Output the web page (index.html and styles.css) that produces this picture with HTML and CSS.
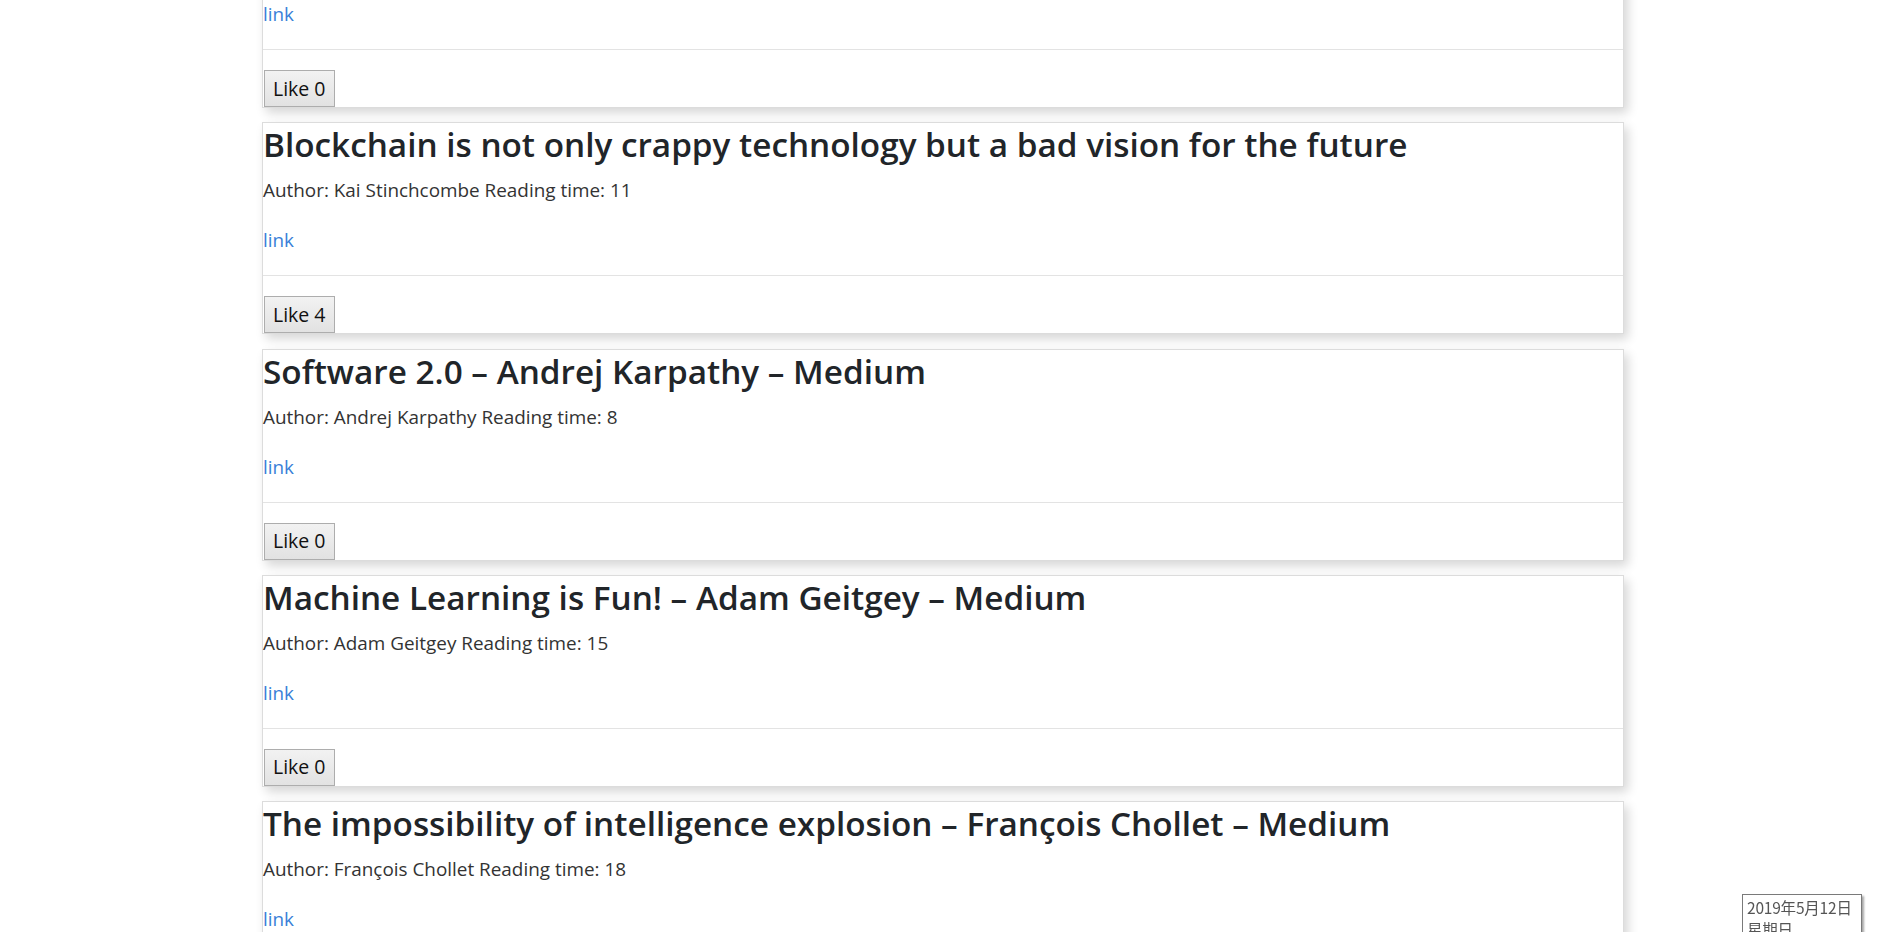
FILE: index.html
```html
<!DOCTYPE html>
<html lang="en">
<head>
<meta charset="utf-8">
<title>Reading list</title>
<link rel="stylesheet" href="styles.css">
</head>
<body>
<main class="feed">
  <article class="card card--scrolled">
    <h3 class="card-title">Why We Sleep – Matthew Walker – Medium</h3>
    <p class="card-meta">Author: Matthew Walker Reading time: 9</p>
    <p class="card-link"><a href="#">link</a></p>
    <hr class="card-rule">
    <button class="like-btn" type="button">Like 0</button>
  </article>
  <article class="card">
    <h3 class="card-title">Blockchain is not only crappy technology but a bad vision for the future</h3>
    <p class="card-meta">Author: Kai Stinchcombe Reading time: 11</p>
    <p class="card-link"><a href="#">link</a></p>
    <hr class="card-rule">
    <button class="like-btn" type="button">Like 4</button>
  </article>
  <article class="card">
    <h3 class="card-title">Software 2.0 – Andrej Karpathy – Medium</h3>
    <p class="card-meta">Author: Andrej Karpathy Reading time: 8</p>
    <p class="card-link"><a href="#">link</a></p>
    <hr class="card-rule">
    <button class="like-btn" type="button">Like 0</button>
  </article>
  <article class="card">
    <h3 class="card-title">Machine Learning is Fun! – Adam Geitgey – Medium</h3>
    <p class="card-meta">Author: Adam Geitgey Reading time: 15</p>
    <p class="card-link"><a href="#">link</a></p>
    <hr class="card-rule">
    <button class="like-btn" type="button">Like 0</button>
  </article>
  <article class="card">
    <h3 class="card-title">The impossibility of intelligence explosion – François Chollet – Medium</h3>
    <p class="card-meta">Author: François Chollet Reading time: 18</p>
    <p class="card-link"><a href="#">link</a></p>
    <hr class="card-rule">
    <button class="like-btn" type="button">Like 0</button>
  </article>
</main>
<div class="clock-tip">
  <span class="clock-line">2019年5月12日</span>
  <span class="clock-line">星期日</span>
</div>
</body>
</html>
```
FILE: styles.css
```css
html, body {
  margin: 0;
  padding: 0;
  background: #ffffff;
}

body {
  font-family: "Open Sans", "Noto Sans", sans-serif;
  font-size: 18.9px;
  line-height: 30px;
  color: #212529;
  overflow: hidden;
  height: 932px;
}

.feed {
  width: 1362px;
  padding-right: 3px;
  margin: 0 auto;
  display: flex;
  flex-direction: column;
  gap: 14.3px;
}

.card--scrolled {
  margin-top: -104px;
}

.card {
  box-sizing: border-box;
  display: flex;
  flex-direction: column;
  align-items: flex-start;
  background: #ffffff;
  border: 1px solid #dcdcdc;
  box-shadow: 4px 5px 10px rgba(0, 0, 0, 0.16);
}

.card-title {
  margin: 0 0 10px 0;
  padding-top: 1px;
  font-size: 33.3px;
  font-weight: 600;
  line-height: 41px;
  color: #212529;
}

.card-meta {
  margin: 0 0 20px 0;
  color: #333333;
}

.card-link {
  margin: 0 0 20px 0;
}

.card-link a {
  color: #3a7fd8;
  text-decoration: none;
}

.card-rule {
  align-self: stretch;
  margin: 0 0 20px 0;
  border: 0;
  border-top: 1px solid #e3e3e3;
  height: 0;
}

.like-btn {
  margin: 0 0 0 1px;
  box-sizing: border-box;
  height: 37px;
  padding: 0 8px;
  font-family: "Open Sans", "Noto Sans", sans-serif;
  font-size: 19.5px;
  line-height: 30px;
  color: #111111;
  background: linear-gradient(#f2f2f2, #e2e2e2);
  border: 1px solid #adadad;
  border-radius: 0;
}

.clock-tip {
  position: fixed;
  left: 1742px;
  top: 894px;
  width: 120px;
  box-sizing: border-box;
  padding: 1px 4px;
  display: flex;
  flex-direction: column;
  white-space: nowrap;
  font-family: "Noto Sans CJK SC", "Noto Sans", sans-serif;
  font-size: 15.5px;
  letter-spacing: -0.2px;
  line-height: 22px;
  color: #555555;
  background: #ffffff;
  border: 1px solid #7a7a7a;
  box-shadow: 2px 2px 2px rgba(0, 0, 0, 0.35);
}
```
